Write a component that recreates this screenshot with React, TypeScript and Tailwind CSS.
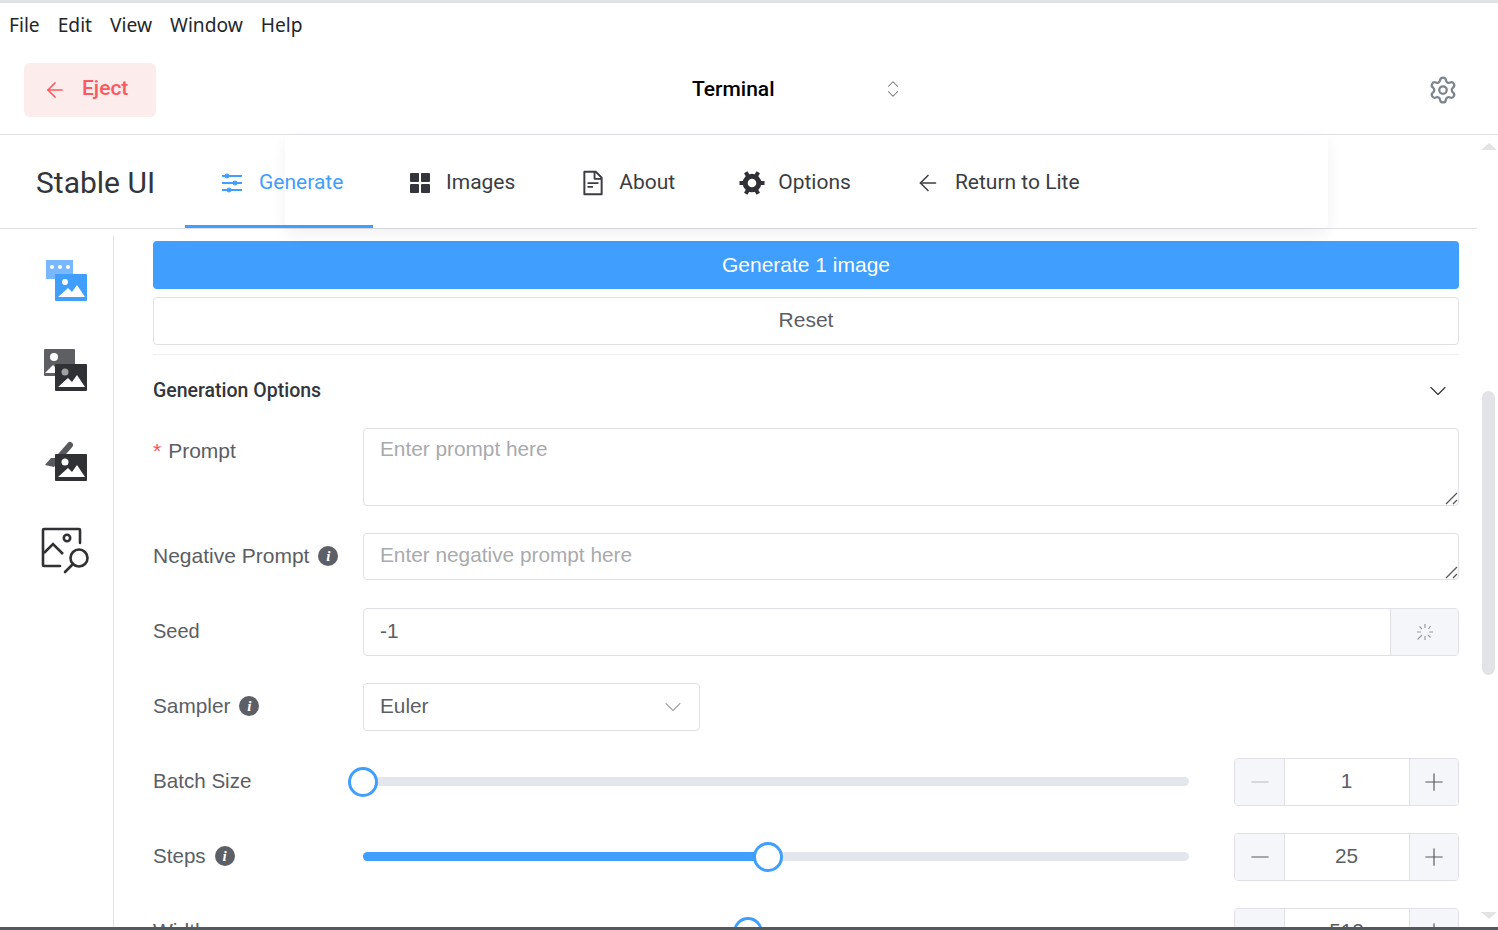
import React from "react";
import { ArrowLeft, ChevronDown, ChevronUp, Settings, Plus, Minus } from "lucide-react";
import { AiOutlineFileText } from "react-icons/ai";

function Info() {
  return (
    <span className="ml-[9px] inline-flex h-[20px] w-[20px] items-center justify-center rounded-full bg-[#5c5f66] text-[15px] font-bold italic leading-none text-white [font-family:'Liberation_Serif',serif]">
      i
    </span>
  );
}

function Row({ label, info, req, children, h, size }: { label: string; info?: boolean; req?: boolean; children: React.ReactNode; h: string; size?: string }) {
  return (
    <div className={`flex items-start ${h}`}>
      <div className={`flex h-[46px] w-[210px] shrink-0 items-center text-[#5b5e64] ${size ?? "text-[21px]"}`}>
        {req && <span className="mr-[7px] text-[#f2545b]">*</span>}
        <span>{label}</span>
        {info && <Info />}
      </div>
      <div className="min-w-0 flex-1">{children}</div>
    </div>
  );
}

function Grip() {
  return (
    <svg viewBox="0 0 13 13" className="absolute bottom-[0px] right-[0px] h-[13px] w-[13px]">
      <path d="M1 12 L12 1 M8 12 L12 8" stroke="#55585e" strokeWidth="1.3" fill="none" />
    </svg>
  );
}

function Stepper({ value, dim }: { value: string; dim?: boolean }) {
  return (
    <div className="flex h-[48px] w-[225px] shrink-0 overflow-hidden rounded-[4px] border border-[#e0e0e6] text-[#5b5e64]">
      <div className="flex w-[50px] items-center justify-center border-r border-[#e0e0e6] bg-[#f5f6fa]">
        <Minus size={28} strokeWidth={1} className={dim ? "text-[#b5b7bc]" : "text-[#55585e]"} />
      </div>
      <div className="flex flex-1 items-center justify-center pb-[2px] pr-[1px] text-[20.8px]">{value}</div>
      <div className="flex w-[49px] items-center justify-center border-l border-[#e0e0e6] bg-[#f5f6fa]">
        <Plus size={28} strokeWidth={1} className="text-[#55585e]" />
      </div>
    </div>
  );
}

function Slider({ pct }: { pct: number }) {
  return (
    <div className="relative mr-[45px] h-[48px] flex-1">
      <div className="absolute left-0 right-0 top-[19px] h-[9px] rounded-full bg-[#e3e6ec]" />
      <div className="absolute left-0 top-[19px] h-[9px] rounded-full bg-[#409eff]" style={{ width: `${pct}%` }} />
      <div
        className="absolute top-[9px] h-[30px] w-[30px] -translate-x-1/2 rounded-full border-[3px] border-[#409eff] bg-white"
        style={{ left: `${pct}%` }}
      />
    </div>
  );
}

function Nav({ icon, label, active, cls }: { icon: React.ReactNode; label: string; active?: boolean; cls: string }) {
  return (
    <div className={`relative flex h-full items-center pt-[2px] text-[21px] ${cls} ${active ? "text-[#409eff]" : "text-[#3b3d42]"}`}>
      {icon}
      <span>{label}</span>
      {active && <div className="absolute bottom-0 left-0 right-0 h-[3px] bg-[#409eff]" />}
    </div>
  );
}

export default function App() {
  return (
    <div className="relative h-[930px] w-[1498px] overflow-hidden bg-white [font-family:Roboto,sans-serif]">
      <div className="h-[3px] bg-[#dfe1e5]" />
      <div className="flex h-[44px] items-center gap-[18px] pl-[9px] text-[19.2px] text-[#24262b] [font-family:'Noto_Sans',sans-serif]">
        <span>File</span><span>Edit</span><span>View</span><span>Window</span><span>Help</span>
      </div>
      <div className="relative flex h-[88px] items-start border-b border-[#e0e0e6] pl-[24px] pt-[16px]">
        <div className="flex h-[54px] w-[132px] items-center rounded-[6px] bg-[#fdecec] pl-[19px] text-[21px] font-medium text-[#f95a5f]">
          <ArrowLeft size={24} strokeWidth={1.7} className="mr-[15px]" />
          <span className="pb-[2px]">Eject</span>
        </div>
        <div className="ml-[536px] flex h-[54px] items-center text-[21px] font-medium text-black">
          <span>Terminal</span>
          <span className="ml-[109px] flex flex-col pb-[2px] text-[#6f7278]">
            <ChevronUp size={18} strokeWidth={1.4} className="-mb-[8px]" />
            <ChevronDown size={18} strokeWidth={1.4} />
          </span>
        </div>
        <Settings size={30} strokeWidth={1.8} className="absolute right-[40px] top-[28px] text-[#7c858e]" />
      </div>
      <div className="flex">
        <div className="w-[1477px] shrink-0">
          <div className="relative flex h-[94px] items-center border-b border-[#e0e0e6]">
            <div className="absolute bottom-0 left-[285px] top-0 w-[1043px] rounded-b-[4px] bg-white shadow-[0_6px_16px_rgba(0,0,0,0.06)]" />
            <div className="relative w-[185px] pl-[36px] pt-[1px] text-[30px] text-[#33353a]">Stable UI</div>
            <div className="relative flex h-full items-center">
              <Nav
                cls="w-[188px] pl-[35px]"
                active
                label="Generate"
                icon={
                  <svg width="24" height="24" viewBox="0 0 24 24" fill="#409eff" stroke="#409eff" className="mr-[15px]">
                    <path d="M2 5h20M2 12h20M2 19h20" strokeWidth="2" />
                    <circle cx="7" cy="5" r="2" /><circle cx="15" cy="12" r="2" /><circle cx="9" cy="19" r="2" />
                  </svg>
                }
              />
              <Nav
                cls="ml-[35px]"
                label="Images"
                icon={
                  <svg width="24" height="24" viewBox="0 0 24 24" fill="#33353a" className="mr-[14px]">
                    <rect x="2" y="2" width="9" height="9" rx="1" /><rect x="13" y="2" width="9" height="9" rx="1" />
                    <rect x="2" y="13" width="9" height="9" rx="1" /><rect x="13" y="13" width="9" height="9" rx="1" />
                  </svg>
                }
              />
              <Nav cls="ml-[65px]" label="About" icon={<AiOutlineFileText size={28} className="mr-[12px] -ml-[1px]" />} />
              <Nav
                cls="ml-[64px]"
                label="Options"
                icon={
                  <svg width="26" height="26" viewBox="0 0 26 26" className="mr-[13px]" fill="none" stroke="#2f3136">
                    <circle cx="13" cy="13" r="6.8" strokeWidth="5" />
                    <path d="M25.5 13H20M6 13H.5M19.25 23.8L16.5 19.06M6.75 23.8L9.5 19.06M19.25 2.2L16.5 6.94M6.75 2.2L9.5 6.94" strokeWidth="4" />
                  </svg>
                }
              />
              <Nav cls="ml-[62px]" label="Return to Lite" icon={<ArrowLeft size={26} strokeWidth={1.4} className="mr-[14px] ml-[2px]" />} />
            </div>
          </div>
          <div className="flex">
            <div className="mt-[7px] flex h-[700px] w-[114px] shrink-0 flex-col items-start border-r border-[#e0e0e6] pl-[40px] pt-[21px]">
              <svg width="50" height="50" viewBox="0 0 50 50">
                <path d="M6 3h27v19H6z" fill="#79b8ff" />
                <circle cx="12" cy="10" r="2" fill="#fff" /><circle cx="20" cy="10" r="2" fill="#fff" /><circle cx="28" cy="10" r="2" fill="#fff" />
                <rect x="15" y="17" width="32" height="27" rx="1" fill="#409eff" />
                <circle cx="25" cy="25" r="3" fill="#fff" />
                <path d="M18 40 L28 31 L32 35 L37 28 L45 40z" fill="#fff" />
              </svg>
              <svg width="50" height="50" viewBox="0 0 50 50" className="mt-[42px]">
                <rect x="4" y="0" width="31" height="27" rx="1" fill="#5e5f62" />
                <circle cx="14" cy="8" r="4" fill="#fff" />
                <path d="M5 24 L13 16 L18 21 L18 24z" fill="#fff" />
                <rect x="15" y="15" width="32" height="27" rx="1" fill="#303134" />
                <circle cx="25" cy="23" r="3.5" fill="#a0a0a2" />
                <path d="M18 38 L28 29 L32 33 L37 26 L45 38z" fill="#fff" />
              </svg>
              <svg width="50" height="50" viewBox="0 0 50 50" className="mt-[40px]">
                <path d="M16 22 L30 6" stroke="#58595c" strokeWidth="6" strokeLinecap="round" />
                <path d="M5 26 L11 19 L16 19 L18 24 L14 28z" fill="#58595c" />
                <rect x="15" y="15" width="32" height="27" rx="1" fill="#303134" />
                <circle cx="25" cy="23" r="3.5" fill="#fff" />
                <path d="M18 38 L28 29 L32 33 L37 26 L45 38z" fill="#fff" />
              </svg>
              <svg width="50" height="50" viewBox="0 0 50 50" className="mt-[38px] ml-[1px]" fill="none" stroke="#303134" strokeWidth="2.6">
                <path d="M39 16V3a1 1 0 0 0-1-1H3a1 1 0 0 0-1 1v35a1 1 0 0 0 1 1h16" strokeLinecap="round" />
                <path d="M3 26 L12 17 L22 27" />
                <circle cx="26" cy="11" r="3.2" />
                <circle cx="38" cy="31" r="8.5" />
                <path d="M32 37 L24 45" strokeLinecap="round" />
              </svg>
            </div>
            <div className="w-[1345px] shrink-0 pl-[39px] [font-family:'Liberation_Sans',sans-serif]">
              <div className="pt-[12px]">
                <div className="flex h-[48px] items-center justify-center rounded-[4px] bg-[#409eff] text-[21px] text-white">Generate 1 image</div>
                <div className="mt-[8px] flex h-[48px] items-center justify-center rounded-[4px] border border-[#e0e0e6] pb-[3px] text-[21px] text-[#5b5e64]">Reset</div>
                <div className="mt-[9px] h-px bg-[#efeff5]" />
                <div className="flex h-[72px] items-center justify-between pr-[7px] text-[19.5px] font-medium text-[#33353a] [font-family:Roboto,sans-serif]">
                  <span>Generation Options</span>
                  <ChevronDown size={28} strokeWidth={1} className="text-[#33353a]" />
                </div>
                <div className="mt-[1px]">
                  <Row label="Prompt" req h="h-[105px]">
                    <div className="relative h-[78px] rounded-[4px] border border-[#e0e0e6] px-[16px] pt-[6px] text-[20.8px] leading-[28px] text-[#a8aaae]">
                      Enter prompt here
                      <Grip />
                    </div>
                  </Row>
                  <Row label="Negative Prompt" info h="h-[75px]">
                    <div className="relative h-[47px] rounded-[4px] border border-[#e0e0e6] px-[16px] pt-[7px] text-[20.8px] leading-[28px] text-[#a8aaae]">
                      Enter negative prompt here
                      <Grip />
                    </div>
                  </Row>
                  <Row label="Seed" size="text-[20px]" h="h-[75px]">
                    <div className="flex h-[48px] overflow-hidden rounded-[4px] border border-[#e0e0e6]">
                      <div className="flex flex-1 items-center px-[16px] pb-[2px] text-[20.8px] text-[#5b5e64]">-1</div>
                      <div className="flex w-[68px] items-center justify-center border-l border-[#e0e0e6] bg-[#f5f6fa]">
                        <svg width="20" height="20" viewBox="0 0 20 20" stroke="#9a9ca1" strokeWidth="1.2" fill="none">
                          <path d="M10 2v4M15.5 4l-2 3M18 10h-4M15.5 15.5l-2.5-2.5M10 18v-4M2.5 17.5L7 13M2 10h4M4.5 4.5L7 7" />
                        </svg>
                      </div>
                    </div>
                  </Row>
                  <Row label="Sampler" size="text-[20.8px]" info h="h-[75px]">
                    <div className="flex h-[48px] w-[337px] items-center justify-between rounded-[4px] border border-[#e0e0e6] pl-[16px] pr-[12px] text-[20.8px] text-[#5b5e64]">
                      <span className="pb-[2px]">Euler</span>
                      <ChevronDown size={28} strokeWidth={0.9} className="text-[#7f8288]" />
                    </div>
                  </Row>
                  <Row label="Batch Size" size="text-[20.6px]" h="h-[75px]">
                    <div className="flex">
                      <Slider pct={0} />
                      <Stepper value="1" dim />
                    </div>
                  </Row>
                  <Row label="Steps" size="text-[20.6px]" info h="h-[75px]">
                    <div className="flex">
                      <Slider pct={49} />
                      <Stepper value="25" />
                    </div>
                  </Row>
                  <Row label="Width" h="h-[75px]">
                    <div className="flex">
                      <Slider pct={46.6} />
                      <Stepper value="512" />
                    </div>
                  </Row>
                </div>
              </div>
            </div>
          </div>
        </div>
      </div>
      <div className="absolute right-[2px] top-[135px] h-[792px] w-[15px]">
        <div className="mx-auto mt-[8px] h-0 w-0 border-x-[8px] border-b-[7px] border-x-transparent border-b-[#e3e3e5]" />
        <div className="absolute left-[1px] top-[256px] h-[284px] w-[13px] rounded-full bg-[#e2e3e6]" />
        <div className="absolute bottom-[8px] left-0 h-0 w-0 border-x-[8px] border-t-[7px] border-x-transparent border-t-[#e3e3e5]" />
      </div>
      <div className="absolute bottom-0 left-0 right-0 h-[3px] bg-[#55585c]" />
    </div>
  );
}
